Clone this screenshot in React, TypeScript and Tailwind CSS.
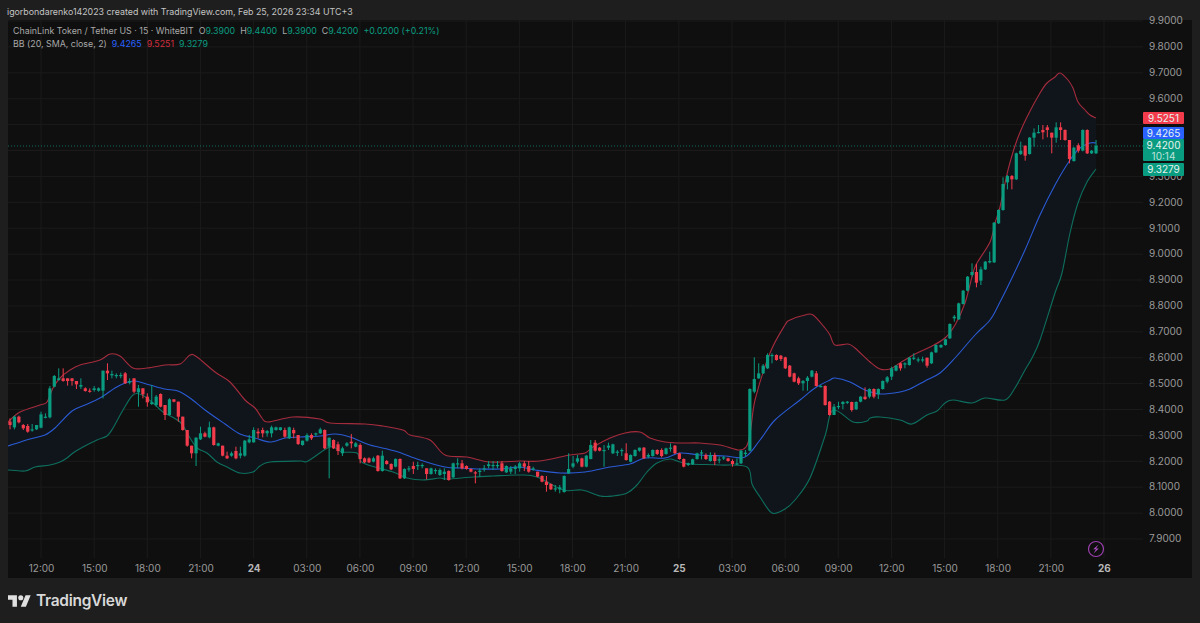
const UP = '#0a9c80';
const DOWN = '#f23c4c';

type Seg = { x: number; base: number; bars: number[][] };

// [green?, body top, body bottom, wick top, wick bottom], y is measured at 3x from base
const segments: Seg[] = [
  {
    x: 10,
    base: 350,
    bars: [
      [0, 215, 225, 205, 238], [1, 200, 232, 197, 238], [0, 200, 217, 197, 220], [0, 225, 235, 222, 240], [0, 228, 245, 222, 248],
      [1, 238, 241, 222, 245], [1, 225, 238, 225, 240], [1, 193, 233, 185, 235], [1, 200, 203, 190, 205], [1, 115, 202, 108, 205],
      [1, 78, 110, 75, 112], [1, 85, 90, 55, 92], [0, 85, 93, 55, 95], [0, 85, 93, 85, 107], [0, 85, 93, 85, 107],
      [0, 93, 103, 93, 117], [1, 105, 110, 85, 117], [0, 115, 123, 112, 125], [0, 122, 125, 115, 128], [1, 115, 120, 108, 125],
      [1, 115, 122, 112, 125], [1, 62, 122, 62, 145], [0, 62, 70, 40, 90], [1, 72, 76, 62, 85], [1, 75, 77, 70, 85],
      [1, 75, 77, 68, 85], [0, 70, 100, 66, 102], [1, 93, 98, 85, 103], [0, 85, 125, 85, 130], [1, 115, 127, 105, 170],
      [0, 115, 133, 115, 145], [0, 140, 157, 130, 170], [1, 157, 162, 105, 165], [1, 140, 165, 135, 170], [0, 132, 170, 130, 172],
      [0, 165, 195, 165, 210], [1, 148, 195, 145, 197], [0, 148, 155, 148, 157], [0, 155, 200, 155, 215], [0, 200, 240, 200, 242],
      [0, 240, 287, 240, 290], [0, 287, 310, 287, 325], [1, 263, 310, 262, 348], [1, 250, 268, 230, 270], [0, 250, 260, 245, 262],
      [1, 232, 262, 215, 265], [0, 232, 285, 230, 287], [1, 280, 287, 278, 289], [0, 287, 317, 287, 319], [0, 317, 325, 305, 327],
      [1, 310, 317, 305, 320], [0, 303, 325, 290, 328], [1, 310, 317, 290, 325], [1, 272, 317, 270, 320], [1, 268, 277, 255, 280],
      [1, 240, 277, 232, 278], [0, 245, 250, 235, 265],
    ],
  },
  {
    x: 262.7,
    base: 400,
    bars: [
      [0, 90, 100, 83, 112], [1, 93, 100, 90, 110], [1, 82, 100, 77, 112], [1, 82, 90, 80, 92], [1, 82, 90, 82, 92],
      [0, 90, 110, 83, 113], [1, 82, 115, 80, 117], [0, 90, 100, 83, 115], [0, 105, 132, 105, 135], [1, 122, 135, 122, 137],
      [1, 105, 122, 100, 125], [0, 105, 115, 100, 120], [1, 100, 103, 98, 108], [1, 88, 100, 83, 102], [0, 90, 145, 88, 147],
      [1, 113, 140, 113, 235], [0, 120, 145, 118, 147], [0, 133, 153, 125, 165], [1, 145, 160, 140, 168], [1, 130, 137, 126, 140],
      [0, 125, 130, 102, 145], [1, 130, 140, 126, 142], [0, 135, 177, 130, 190], [0, 175, 187, 172, 189], [0, 175, 187, 172, 189],
      [1, 175, 185, 170, 187], [0, 167, 213, 165, 215], [1, 167, 213, 152, 215], [0, 183, 192, 180, 194], [0, 192, 208, 190, 210],
      [1, 177, 200, 175, 202], [0, 177, 235, 175, 237], [1, 207, 235, 205, 237], [1, 205, 208, 198, 215], [0, 198, 207, 185, 222],
      [1, 195, 197, 185, 210], [1, 195, 197, 190, 205], [0, 205, 222, 205, 238], [1, 205, 222, 203, 224], [1, 210, 212, 205, 222],
      [1, 210, 225, 205, 228], [1, 215, 222, 205, 240], [0, 213, 240, 211, 242], [1, 190, 232, 188, 234], [1, 190, 192, 175, 205],
      [0, 190, 205, 180, 208], [0, 198, 207, 196, 209], [0, 207, 215, 205, 217], [0, 217, 219, 213, 250], [1, 212, 216, 205, 230],
      [1, 205, 207, 195, 215], [1, 193, 198, 183, 205], [1, 195, 197, 183, 210], [1, 195, 197, 183, 205], [0, 190, 213, 183, 215],
      [1, 198, 217, 196, 219], [1, 205, 215, 198, 222], [1, 200, 207, 195, 222], [1, 190, 205, 185, 215],
    ],
  },
  {
    x: 524.3,
    base: 400,
    bars: [
      [0, 190, 200, 183, 213], [0, 198, 215, 183, 218], [1, 205, 207, 200, 212], [0, 215, 230, 215, 232], [0, 228, 245, 226, 247],
      [0, 245, 255, 228, 275], [0, 252, 268, 250, 270], [1, 265, 268, 255, 275], [1, 262, 268, 255, 280], [1, 228, 276, 226, 278],
      [1, 207, 220, 160, 222], [1, 190, 200, 168, 205], [1, 175, 185, 165, 190], [0, 175, 200, 173, 202], [1, 167, 200, 165, 202],
      [1, 135, 177, 120, 178], [0, 128, 152, 120, 155], [0, 143, 152, 141, 154], [1, 150, 152, 135, 200], [1, 137, 143, 128, 150],
      [1, 133, 160, 131, 162], [1, 155, 158, 150, 168], [1, 150, 152, 145, 168], [0, 160, 180, 130, 182], [1, 165, 185, 163, 187],
      [1, 150, 168, 148, 170], [1, 143, 152, 143, 155], [0, 143, 175, 141, 177], [1, 165, 170, 160, 175], [1, 150, 168, 148, 170],
      [0, 150, 162, 148, 165], [0, 150, 168, 145, 172], [1, 145, 162, 143, 164], [1, 143, 145, 130, 155], [0, 137, 160, 135, 162],
      [0, 160, 177, 158, 179], [0, 177, 200, 175, 202], [1, 190, 195, 188, 198], [1, 178, 193, 176, 195], [1, 160, 177, 158, 179],
      [1, 157, 160, 150, 178], [0, 165, 177, 160, 180], [1, 165, 183, 157, 185], [0, 165, 183, 158, 195], [1, 178, 180, 170, 190],
      [1, 172, 175, 168, 180], [0, 175, 183, 173, 185], [0, 183, 192, 178, 200], [1, 190, 193, 175, 195],
    ],
  },
  {
    x: 741,
    base: 300,
    bars: [
      [1, 452, 490, 450, 492], [1, 458, 462, 450, 470], [1, 267, 452, 265, 454], [1, 237, 275, 172, 280], [1, 220, 235, 190, 237],
      [1, 197, 220, 192, 222], [1, 165, 205, 160, 207], [1, 165, 167, 160, 190], [0, 165, 180, 163, 182], [0, 167, 177, 165, 183],
      [0, 172, 205, 170, 207], [0, 197, 230, 195, 232], [0, 220, 245, 218, 247], [0, 235, 250, 230, 255], [1, 243, 250, 240, 272],
      [1, 233, 243, 228, 272], [1, 212, 230, 210, 232], [0, 220, 258, 213, 260], [1, 258, 260, 255, 262], [0, 258, 315, 256, 317],
      [0, 305, 345, 303, 347], [1, 320, 345, 312, 345], [1, 318, 320, 305, 328], [1, 306, 312, 303, 328], [1, 305, 307, 303, 312],
      [0, 306, 330, 305, 335], [1, 306, 328, 304, 330], [1, 290, 305, 288, 307], [0, 290, 297, 262, 300], [1, 267, 290, 265, 295],
      [0, 267, 290, 265, 295], [1, 267, 283, 265, 297], [1, 243, 267, 241, 269], [1, 232, 245, 228, 250], [1, 205, 230, 200, 240],
      [1, 197, 212, 195, 214], [0, 190, 205, 188, 212], [1, 190, 192, 187, 205], [1, 173, 195, 171, 197], [1, 173, 175, 160, 180],
      [1, 178, 180, 172, 187], [1, 178, 180, 170, 187], [0, 173, 197, 173, 203], [1, 157, 190, 155, 192], [1, 135, 157, 133, 159],
    ],
  },
  {
    x: 941,
    base: 60,
    bars: [
      [1, 855, 862, 853, 864], [1, 838, 855, 836, 857], [1, 792, 835, 790, 837], [1, 770, 775, 765, 785], [1, 730, 778, 728, 780],
      [1, 692, 732, 690, 734], [1, 650, 692, 648, 694], [1, 636, 645, 610, 650], [0, 636, 668, 612, 682], [1, 628, 662, 620, 675],
      [1, 605, 628, 603, 630], [1, 603, 607, 575, 610], [1, 488, 607, 486, 609], [1, 450, 490, 448, 492], [1, 372, 450, 352, 452],
      [1, 348, 367, 345, 388], [0, 348, 358, 345, 388], [1, 280, 358, 278, 360], [1, 272, 282, 245, 285], [0, 257, 287, 257, 302],
      [1, 233, 282, 231, 284], [1, 218, 233, 205, 260], [1, 216, 218, 195, 220], [0, 210, 217, 195, 238], [0, 202, 210, 195, 232],
      [0, 218, 233, 218, 280], [1, 202, 233, 187, 248], [0, 202, 210, 187, 240], [0, 210, 240, 208, 242], [0, 240, 297, 240, 310],
      [1, 263, 303, 261, 305], [0, 256, 272, 250, 278], [1, 210, 272, 208, 274], [0, 210, 280, 208, 282], [1, 272, 280, 270, 282],
      [1, 257, 280, 240, 282],
    ],
  },
];

const upper: number[][] = [
  [8, 422], [20, 412], [40, 405], [47, 402], [53, 388], [60, 378], [70, 370], [80, 365], [100, 360], [110, 354], [120, 356],
  [133, 368], [147, 368], [165, 365], [180, 364], [190, 355], [197, 357], [215, 372], [230, 382], [245, 400], [255, 408], [262, 418],
  [268, 422], [293, 417], [320, 419], [330, 423], [365, 424], [383, 426], [403, 430], [410, 435], [430, 440], [445, 455], [467, 457],
  [490, 462], [520, 461], [540, 461], [570, 455], [585, 453], [593, 447], [610, 438], [625, 433], [640, 432], [650, 438], [665, 442],
  [680, 443], [700, 443], [720, 445], [746, 447], [755, 400], [770, 353], [785, 325], [790, 320], [805, 315], [813, 315], [825, 328],
  [830, 335], [835, 345], [848, 344], [855, 348], [870, 362], [880, 369], [890, 369], [900, 363], [915, 354], [930, 347], [945, 338],
  [955, 325], [965, 303], [973, 273], [977, 263], [990, 242], [995, 223], [1000, 207], [1008, 170], [1017, 140], [1027, 117], [1040, 93],
  [1047, 83], [1055, 77], [1060, 73], [1068, 80], [1073, 88], [1078, 102], [1085, 110], [1090, 115], [1096, 118],
];

const middle: number[][] = [
  [8, 446], [30, 439], [45, 435], [55, 428], [72, 411], [85, 405], [100, 398], [115, 388], [125, 383], [135, 381], [150, 385],
  [165, 389], [178, 391], [190, 398], [205, 410], [225, 424], [240, 434], [255, 438], [270, 442], [285, 438], [300, 437], [320, 436],
  [335, 434], [350, 437], [370, 445], [395, 451], [420, 460], [445, 467], [460, 468], [480, 469], [500, 469], [520, 467], [535, 470],
  [560, 473], [585, 472], [610, 467], [630, 464], [645, 458], [665, 458], [680, 453], [700, 455], [725, 456], [745, 457], [760, 440],
  [775, 420], [800, 400], [815, 388], [830, 380], [835, 378], [850, 382], [865, 390], [880, 394], [900, 392], [910, 389], [925, 381],
  [940, 373], [955, 358], [975, 335], [990, 320], [1000, 302], [1010, 282], [1025, 250], [1040, 215], [1055, 185], [1070, 160],
  [1080, 148], [1090, 143], [1096, 143],
];

const lower: number[][] = [
  [8, 470], [25, 471], [35, 467], [50, 465], [60, 462], [67, 458], [73, 453], [83, 447], [97, 440], [107, 436], [113, 428], [123, 410],
  [133, 395], [142, 395], [153, 403], [163, 412], [180, 422], [190, 438], [197, 448], [207, 453], [217, 462], [227, 467], [240, 473],
  [253, 472], [260, 466], [270, 462], [300, 461], [308, 461], [330, 447], [342, 452], [357, 453], [363, 463], [393, 472], [407, 478],
  [423, 480], [440, 478], [447, 479], [473, 477], [493, 476], [520, 475], [537, 477], [563, 490], [582, 490], [600, 496], [613, 496],
  [627, 493], [637, 485], [647, 472], [657, 463], [670, 459], [680, 462], [690, 464], [720, 465], [747, 467], [752, 484], [760, 497],
  [772, 513], [785, 509], [795, 500], [810, 478], [825, 436], [833, 410], [853, 422], [867, 421], [870, 418], [880, 417], [900, 420],
  [912, 424], [927, 415], [937, 411], [945, 403], [953, 400], [972, 403], [985, 398], [1005, 400], [1015, 388], [1025, 370], [1032, 358],
  [1040, 340], [1055, 293], [1062, 273], [1070, 233], [1078, 203], [1087, 182], [1096, 169],
];

const prices = ['9.9000', '9.8000', '9.7000', '9.6000', '9.5000', '9.4000', '9.3000', '9.2000', '9.1000', '9.0000', '8.9000', '8.8000', '8.7000', '8.6000', '8.5000', '8.4000', '8.3000', '8.2000', '8.1000', '8.0000', '7.9000'];
const times = ['12:00', '15:00', '18:00', '21:00', '24', '03:00', '06:00', '09:00', '12:00', '15:00', '18:00', '21:00', '25', '03:00', '06:00', '09:00', '12:00', '15:00', '18:00', '21:00', '26'];

// catmull-rom through the points, without the leading M
const curve = (p: number[][]) => {
  let d = '';
  for (let i = 0; i < p.length - 1; i++) {
    const a = p[Math.max(i - 1, 0)];
    const b = p[i];
    const c = p[i + 1];
    const e = p[Math.min(i + 2, p.length - 1)];
    const c1x = b[0] + (c[0] - a[0]) / 6;
    const c1y = b[1] + (c[1] - a[1]) / 6;
    const c2x = c[0] - (e[0] - b[0]) / 6;
    const c2y = c[1] - (e[1] - b[1]) / 6;
    d += `C${c1x} ${c1y} ${c2x} ${c2y} ${c[0]} ${c[1]}`;
  }
  return d;
};
const line = (p: number[][]) => `M${p[0][0]} ${p[0][1]}${curve(p)}`;
const flipped = [...lower].reverse();
const band = `${line(upper)}L${flipped[0][0]} ${flipped[0][1]}${curve(flipped)}Z`;

function Plot() {
  return (
    <svg className="block w-full h-full" viewBox="8 20 1135 538">
      {prices.map((_, i) => (
        <line key={i} x1={8} x2={1143} y1={21 + i * 25.9} y2={21 + i * 25.9} stroke="#1b1b1b" />
      ))}
      {times.map((_, i) => (
        <line key={i} x1={41 + i * 53.15} x2={41 + i * 53.15} y1={20} y2={558} stroke="#1b1b1b" />
      ))}
      <path d={band} fill="#10151c" />
      <line x1={8} x2={1143} y1={146} y2={146} stroke="#0a9c80" strokeDasharray="1 2" opacity={0.7} />
      <path d={line(upper)} fill="none" stroke="#a52c3d" strokeWidth={1.1} />
      <path d={line(lower)} fill="none" stroke="#0e6f5e" strokeWidth={1.1} />
      <path d={line(middle)} fill="none" stroke="#2a5bd4" strokeWidth={1.1} />
      {segments.map((seg) =>
        seg.bars.map((b, i) => {
          const x = seg.x + i * 4.43;
          const color = b[0] ? UP : DOWN;
          return (
            <g key={`${seg.x}-${i}`} fill={color}>
              <rect x={x - 0.5} y={seg.base + b[3] / 3} width={1} height={(b[4] - b[3]) / 3} />
              <rect x={x - 1.6} y={seg.base + b[1] / 3} width={3.2} height={Math.max((b[2] - b[1]) / 3, 1.2)} />
            </g>
          );
        }),
      )}
      <circle cx={1096} cy={549} r={7.5} fill="#0f0f0f" stroke="#9b3fae" strokeWidth={1.2} />
      <path d="M1098.5 544.5 L1093.2 549.2 L1096 549.2 L1093.5 553.5 L1098.8 548.6 L1096 548.6 Z" fill="#b04cc6" />
    </svg>
  );
}

function PriceTag({ bg, top, height, children }: { bg: string; top: string; height: string; children: React.ReactNode }) {
  return (
    <div className={`absolute left-0 w-[41px] rounded-[1px] text-center text-[10px] leading-[12.5px] text-[#e6f2ef] ${bg} ${top} ${height}`}>
      {children}
    </div>
  );
}

export default function App() {
  return (
    <div className="flex flex-col w-[1200px] h-[623px] overflow-hidden bg-[#1e1e1e] font-['Inter','Liberation_Sans',sans-serif]">
      <div className="h-[20px] pl-[7px] text-[8.85px] leading-[23px] text-[#c4c4c4] whitespace-nowrap">
        igorbondarenko142023 created with TradingView.com, Feb 25, 2026 23:34 UTC+3
      </div>

      <div className="relative mx-2 h-[558px] flex flex-col bg-[#0f0f0f]">
        <div className="flex h-[538px]">
          <div className="w-[1135px]">
            <Plot />
          </div>
          <div className="relative flex-1">
            <div className="flex flex-col -mt-[12px] pl-[6px] text-[10px] text-[#9a9a9a]">
              {prices.map((p) => (
                <div key={p} className={`h-[25.9px] flex items-center ${p === '9.5000' || p === '9.4000' ? 'invisible' : ''}`}>{p}</div>
              ))}
            </div>
            <PriceTag bg="bg-[#f23c4c]" top="top-[92px]" height="h-[12px]">9.5251</PriceTag>
            <PriceTag bg="bg-[#2962ff]" top="top-[107px]" height="h-[12px]">9.4265</PriceTag>
            <PriceTag bg="bg-[#0a9c80]" top="top-[119px]" height="h-[22px]">
              <div>9.4200</div>
              <div className="text-[#bfe3db] leading-[9px]">10:14</div>
            </PriceTag>
            <PriceTag bg="bg-[#0a9c80]" top="top-[143px]" height="h-[13px]">9.3279</PriceTag>
          </div>
        </div>
        <div className="flex h-[20px] pl-[7px] items-center text-[10px] text-[#9a9a9a]">
          {times.map((t, i) => (
            <div key={i} className={`w-[53.15px] shrink-0 text-center ${t.length === 2 ? 'font-bold text-[#b8b8b8]' : ''}`}>
              {t}
            </div>
          ))}
        </div>

        <div className="absolute left-[5px] top-[5px] text-[8.85px] leading-[12.7px] text-[#a8a8a8] whitespace-nowrap">
          <div className="flex gap-[5px]">
            <span>ChainLink Token / Tether US · 15 · WhiteBIT</span>
            <span>O<span className="text-[#0a9c80]">9.3900</span></span>
            <span>H<span className="text-[#0a9c80]">9.4400</span></span>
            <span>L<span className="text-[#0a9c80]">9.3900</span></span>
            <span>C<span className="text-[#0a9c80]">9.4200</span></span>
            <span className="text-[#0a9c80]">+0.0200 (+0.21%)</span>
          </div>
          <div className="flex gap-[5px]">
            <span>BB (20, SMA, close, 2)</span>
            <span className="text-[#2962ff]">9.4265</span>
            <span className="text-[#d12e3f]">9.5251</span>
            <span className="text-[#0a9c80]">9.3279</span>
          </div>
        </div>
      </div>

      <div className="flex flex-1 items-center gap-[5px] pl-2 pt-[1px]">
        <svg width="23" height="12" viewBox="0 4 36 18" fill="#e0e0e0">
          <path d="M14 22H7V11H0V4h14v18zM28 22h-8l7.5-18h8L28 22z" />
          <circle cx="20" cy="8" r="4" />
        </svg>
        <span className="text-[15.5px] font-semibold tracking-[-0.3px] text-[#d8d8d8]">TradingView</span>
      </div>
    </div>
  );
}
